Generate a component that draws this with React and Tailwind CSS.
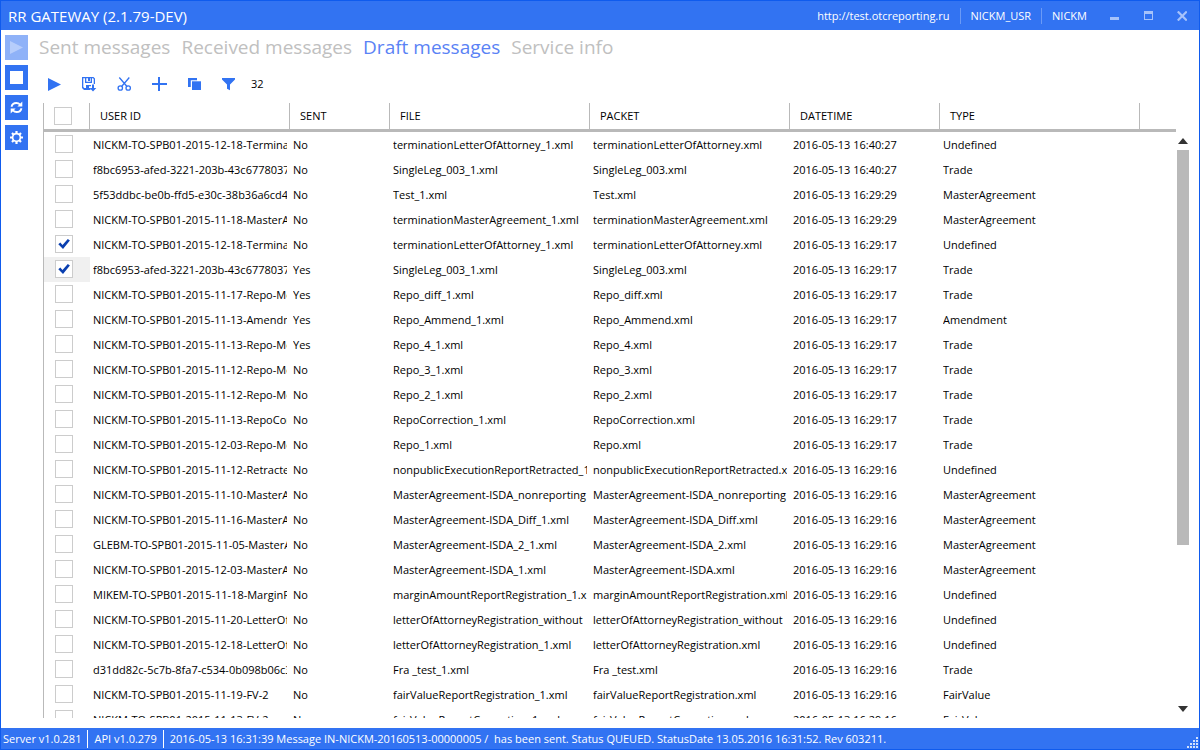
import { useState } from "react";

const ROWS = [
  ["NICKM-TO-SPB01-2015-12-18-Terminat", "No", "terminationLetterOfAttorney_1.xml", "terminationLetterOfAttorney.xml", "2016-05-13 16:40:27", "Undefined"],
  ["f8bc6953-afed-3221-203b-43c6778037", "No", "SingleLeg_003_1.xml", "SingleLeg_003.xml", "2016-05-13 16:40:27", "Trade"],
  ["5f53ddbc-be0b-ffd5-e30c-38b36a6cd4", "No", "Test_1.xml", "Test.xml", "2016-05-13 16:29:29", "MasterAgreement"],
  ["NICKM-TO-SPB01-2015-11-18-MasterA", "No", "terminationMasterAgreement_1.xml", "terminationMasterAgreement.xml", "2016-05-13 16:29:29", "MasterAgreement"],
  ["NICKM-TO-SPB01-2015-12-18-Terminat", "No", "terminationLetterOfAttorney_1.xml", "terminationLetterOfAttorney.xml", "2016-05-13 16:29:17", "Undefined"],
  ["f8bc6953-afed-3221-203b-43c6778037", "Yes", "SingleLeg_003_1.xml", "SingleLeg_003.xml", "2016-05-13 16:29:17", "Trade"],
  ["NICKM-TO-SPB01-2015-11-17-Repo-Mo", "Yes", "Repo_diff_1.xml", "Repo_diff.xml", "2016-05-13 16:29:17", "Trade"],
  ["NICKM-TO-SPB01-2015-11-13-Amendm", "Yes", "Repo_Ammend_1.xml", "Repo_Ammend.xml", "2016-05-13 16:29:17", "Amendment"],
  ["NICKM-TO-SPB01-2015-11-13-Repo-Mo", "Yes", "Repo_4_1.xml", "Repo_4.xml", "2016-05-13 16:29:17", "Trade"],
  ["NICKM-TO-SPB01-2015-11-12-Repo-Mo", "No", "Repo_3_1.xml", "Repo_3.xml", "2016-05-13 16:29:17", "Trade"],
  ["NICKM-TO-SPB01-2015-11-12-Repo-Mo", "No", "Repo_2_1.xml", "Repo_2.xml", "2016-05-13 16:29:17", "Trade"],
  ["NICKM-TO-SPB01-2015-11-13-RepoCor", "No", "RepoCorrection_1.xml", "RepoCorrection.xml", "2016-05-13 16:29:17", "Trade"],
  ["NICKM-TO-SPB01-2015-12-03-Repo-Mo", "No", "Repo_1.xml", "Repo.xml", "2016-05-13 16:29:17", "Trade"],
  ["NICKM-TO-SPB01-2015-11-12-Retracte", "No", "nonpublicExecutionReportRetracted_1", "nonpublicExecutionReportRetracted.x", "2016-05-13 16:29:16", "Undefined"],
  ["NICKM-TO-SPB01-2015-11-10-MasterA", "No", "MasterAgreement-ISDA_nonreporting", "MasterAgreement-ISDA_nonreporting", "2016-05-13 16:29:16", "MasterAgreement"],
  ["NICKM-TO-SPB01-2015-11-16-MasterA", "No", "MasterAgreement-ISDA_Diff_1.xml", "MasterAgreement-ISDA_Diff.xml", "2016-05-13 16:29:16", "MasterAgreement"],
  ["GLEBM-TO-SPB01-2015-11-05-MasterA", "No", "MasterAgreement-ISDA_2_1.xml", "MasterAgreement-ISDA_2.xml", "2016-05-13 16:29:16", "MasterAgreement"],
  ["NICKM-TO-SPB01-2015-12-03-MasterA", "No", "MasterAgreement-ISDA_1.xml", "MasterAgreement-ISDA.xml", "2016-05-13 16:29:16", "MasterAgreement"],
  ["MIKEM-TO-SPB01-2015-11-18-MarginR", "No", "marginAmountReportRegistration_1.x", "marginAmountReportRegistration.xml", "2016-05-13 16:29:16", "Undefined"],
  ["NICKM-TO-SPB01-2015-11-20-LetterOf", "No", "letterOfAttorneyRegistration_without", "letterOfAttorneyRegistration_without", "2016-05-13 16:29:16", "Undefined"],
  ["NICKM-TO-SPB01-2015-12-18-LetterOf", "No", "letterOfAttorneyRegistration_1.xml", "letterOfAttorneyRegistration.xml", "2016-05-13 16:29:16", "Undefined"],
  ["d31dd82c-5c7b-8fa7-c534-0b098b06c3", "No", "Fra _test_1.xml", "Fra _test.xml", "2016-05-13 16:29:16", "Trade"],
  ["NICKM-TO-SPB01-2015-11-19-FV-2", "No", "fairValueReportRegistration_1.xml", "fairValueReportRegistration.xml", "2016-05-13 16:29:16", "FairValue"],
  ["NICKM-TO-SPB01-2015-11-13-FV-2", "No", "fairValueReportCorrection_1.xml", "fairValueReportCorrection.xml", "2016-05-13 16:29:16", "FairValue"],
];

const HEADINGS = ["USER ID", "SENT", "FILE", "PACKET", "DATETIME", "TYPE"];
const TABS = ["Sent messages", "Received messages", "Draft messages", "Service info"];

function TickBox({ label, checked, onChange }) {
  return (
    <span className="grid size-[18px] grid-cols-1 grid-rows-1">
      <input
        type="checkbox"
        aria-label={label}
        checked={checked}
        onChange={onChange}
        className="col-start-1 row-start-1 size-[18px] appearance-none border border-[#cccccc] bg-white"
      />
      {checked && (
        <svg viewBox="0 0 18 18" className="pointer-events-none col-start-1 row-start-1 size-[18px]" aria-hidden="true">
          <path d="M3.300 9.200 5.300 7.500 7.500 9.900 12.800 4 14.900 5.400 8 13.900z" fill="#0a3fb0" />
        </svg>
      )}
    </span>
  );
}

function SideButton({ label, disabled, children }) {
  return (
    <button
      type="button"
      aria-label={label}
      disabled={disabled}
      className="flex h-[25px] w-[23px] items-center justify-center bg-[#3273f2] text-white disabled:bg-[#8fb2f8] disabled:text-[#b6cdfb]"
    >
      {children}
    </button>
  );
}

function ToolButton({ label, children }) {
  return (
    <button type="button" aria-label={label} className="flex size-5 items-center justify-center text-[#3273f2]">
      <svg viewBox="0 0 16 16" className="size-4" fill="currentColor" aria-hidden="true">
        {children}
      </svg>
    </button>
  );
}

function SideBar() {
  return (
    <nav className="flex w-[23px] flex-col gap-[5px] pt-[5px]" aria-label="Service control">
      <SideButton label="Start" disabled>
        <svg viewBox="0 0 13 13" className="size-[13px]" fill="currentColor">
          <path d="M0 0 13 6.500 0 13z" />
        </svg>
      </SideButton>
      <SideButton label="Stop">
        <svg viewBox="0 0 13 13" className="size-[13px]" fill="currentColor">
          <path d="M0 0h13v13H0z" />
        </svg>
      </SideButton>
      <SideButton label="Refresh">
        <svg viewBox="0 0 13 13" className="size-[13px]" fill="none" stroke="currentColor" strokeWidth="1.800">
          <path d="M1.500 5.800C2 3.400 3.800 2 6.300 2c1.600 0 2.800.6 3.800 1.700" />
          <path d="M11.500 7.200C11 9.600 9.200 11 6.700 11c-1.600 0-2.800-.6-3.800-1.700" />
          <path d="M12.300.600v4.900H7.400z" fill="currentColor" stroke="none" />
          <path d="M.700 12.400V7.500h4.900z" fill="currentColor" stroke="none" />
        </svg>
      </SideButton>
      <SideButton label="Settings">
        <svg viewBox="0 0 13 13" className="size-[13px]" fill="none" stroke="currentColor">
          <circle cx="6.500" cy="6.500" r="3.900" strokeWidth="1.700" />
          <path
            d="M6.500 0v2.500M6.500 10.500V13M0 6.500h2.500M10.500 6.500H13M2 2l1.700 1.700M9.300 9.300 11 11M11 2 9.300 3.700M3.700 9.300 2 11"
            strokeWidth="2.200"
          />
        </svg>
      </SideButton>
    </nav>
  );
}

function ToolBar() {
  return (
    <div className="flex h-[39px] shrink-0 items-start gap-3 pt-[10px] pl-[5px]" role="toolbar" aria-label="Message actions">
      <div className="flex gap-[15px]">
        <ToolButton label="Send">
          <path d="M2 2 15 8.500 2 15z" />
        </ToolButton>
        <ToolButton label="Save">
          <path d="M1 1h11.500L14 2.500V8h-1.300V3l-.7-.7h-1V7H4V2.300H2.300V11l1 1H5V9h5v1.300H8V12h1.500v2H3L1 12zM5.300 2.300v3.400h4.400V2.300H9V5H7V2.300z" fillRule="evenodd" />
          <path d="M11 8.500h2V12h2.300L12 15.500 8.700 12H11z" />
        </ToolButton>
        <ToolButton label="Cut">
          <path d="M3.300 1.500 11 10.500M13.300 1.500 5.600 10.500" fill="none" stroke="currentColor" strokeWidth="1.300" />
          <circle cx="4.300" cy="12" r="2.200" fill="none" stroke="currentColor" strokeWidth="1.300" />
          <circle cx="12.200" cy="12" r="2.200" fill="none" stroke="currentColor" strokeWidth="1.300" />
        </ToolButton>
        <ToolButton label="Add">
          <path d="M7 1h2v6h7v2H9v6H7V9H1V7h6z" />
        </ToolButton>
        <ToolButton label="Copy">
          <path d="M2 2h9v2.300H4.800V11H2z" />
          <path d="M6 5.300h9V14H6z" />
        </ToolButton>
        <ToolButton label="Filter">
          <path d="M1 2h13v1.500L9 8.500v5.800l-3-1.600V8.500L1 3.500z" />
        </ToolButton>
      </div>
      <span className="text-[11px] leading-5 text-black">32</span>
    </div>
  );
}

function MessageTable() {
  const [picked, setPicked] = useState([4, 5]);
  const toggle = (i) => setPicked((p) => (p.includes(i) ? p.filter((n) => n !== i) : [...p, i]));
  const all = picked.length === ROWS.length;
  return (
    <div className="min-w-0 flex-1 overflow-hidden border-l border-[#b9b9b9]">
      <table className="w-full table-fixed border-separate border-spacing-0 text-[11px] leading-4 text-black">
        <colgroup>
          <col className="w-[46px]" />
          <col className="w-[200px]" />
          <col className="w-[100px]" />
          <col className="w-[200px]" />
          <col className="w-[200px]" />
          <col className="w-[150px]" />
          <col className="w-[200px]" />
          <col />
        </colgroup>
        <thead>
          <tr className="h-[29px]">
            <th className="border-r border-b-3 border-r-[#b9b9b9] border-b-[#b9b9b9] p-0 pl-[10px]">
              <TickBox label="Select all" checked={all} onChange={() => setPicked(all ? [] : ROWS.map((_, i) => i))} />
            </th>
            {HEADINGS.map((h) => (
              <th key={h} scope="col" className="border-r border-b-3 border-r-[#b9b9b9] border-b-[#b9b9b9] p-0 pl-[10px] text-left font-normal">
                {h}
              </th>
            ))}
            <th className="border-b-3 border-[#b9b9b9] p-0" />
          </tr>
        </thead>
        <tbody>
          {ROWS.map((row, i) => (
            <tr key={i} className="h-[25px]">
              <td className={i === 5 ? "bg-[#f0f0f0] p-0 pt-[3px] pl-[11px] align-top" : "p-0 pt-[3px] pl-[11px] align-top"}>
                <TickBox label={"Select row " + (i + 1)} checked={picked.includes(i)} onChange={() => toggle(i)} />
              </td>
              {row.map((cell, c) => (
                <td key={c} className="px-[3px] py-0">
                  <div className="overflow-hidden whitespace-nowrap">{cell}</div>
                </td>
              ))}
              <td className="p-0" />
            </tr>
          ))}
        </tbody>
      </table>
    </div>
  );
}

function ScrollTrack() {
  return (
    <div className="flex w-[13px] flex-col items-center pt-[35px] pb-[6px]" aria-hidden="true">
      <svg viewBox="0 0 10 6" className="h-[6px] w-[10px] shrink-0" fill="#333333">
        <path d="M5 0 10 6H0z" />
      </svg>
      <div className="mt-[6px] flex w-full flex-1 flex-col pl-px">
        <div className="w-full flex-[395] bg-[#b9b9b9]" />
        <div className="flex-[161]" />
      </div>
      <svg viewBox="0 0 10 6" className="h-[6px] w-[10px] shrink-0" fill="#333333">
        <path d="M0 0h10L5 6z" />
      </svg>
    </div>
  );
}

export default function App() {
  return (
    <div className="flex h-screen flex-col overflow-hidden border border-[#0f5bee] bg-white font-['Open_Sans','Noto_Sans',sans-serif]">
      <header className="flex h-[29px] shrink-0 items-center bg-[#3273f2] pl-[7px] text-white">
        <h1 className="flex-1 text-[15px] leading-5">RR GATEWAY (2.1.79-DEV)</h1>
        <div className="flex items-center text-[11px] leading-4">
          <a href="http://test.otcreporting.ru" className="pr-[10px]">http://test.otcreporting.ru</a>
          <span className="border-l border-[#6b9af6] px-[10px]">NICKM_USR</span>
          <span className="border-l border-[#6b9af6] px-[10px]">NICKM</span>
        </div>
        <div className="flex items-center text-[#a6c2fa]">
          <button type="button" aria-label="Minimize" className="flex h-7 w-[34px] items-center justify-center">
            <svg viewBox="0 0 10 10" className="size-[10px]" fill="currentColor"><path d="M1 6h9v3H1z" /></svg>
          </button>
          <button type="button" aria-label="Maximize" className="flex h-7 w-[34px] items-center justify-center">
            <svg viewBox="0 0 10 10" className="size-[10px]" fill="currentColor"><path d="M1 0h9v9H1zM2 3v5h7V3z" fillRule="evenodd" /></svg>
          </button>
          <button type="button" aria-label="Close" className="flex h-7 w-[34px] items-center justify-center">
            <svg viewBox="0 0 10 10" className="size-[10px]" fill="none" stroke="currentColor" strokeWidth="2.200"><path d="M.8.5l9 9M9.800.5l-9 9" /></svg>
          </button>
        </div>
      </header>

      <div className="flex min-h-0 flex-1 pl-1">
        <SideBar />
        <main className="flex min-w-0 flex-1 flex-col pr-[10px] pb-[10px] pl-[11px]">
          <div className="flex h-[34px] shrink-0 gap-[11px] pt-[3px]" role="tablist">
            {TABS.map((t) => (
              <button
                key={t}
                type="button"
                role="tab"
                aria-selected={t === "Draft messages"}
                className="h-7 text-[19px] leading-7 whitespace-nowrap text-[#c0c0c0] aria-selected:text-[#5a82f5]"
              >
                {t}
              </button>
            ))}
          </div>
          <ToolBar />
          <div className="flex min-h-0 flex-1 pl-1">
            <MessageTable />
            <ScrollTrack />
          </div>
        </main>
      </div>

      <footer className="flex h-[21px] shrink-0 items-center justify-between bg-[#3273f2] pl-[2px] text-[11px] leading-[18px] text-white">
        <div className="flex items-center whitespace-pre">
          <span className="pr-[6px]">Server v1.0.281</span>
          <span className="border-l border-white px-[6px]">API v1.0.279</span>
          <span className="border-l border-white pl-[6px]">
            {"2016-05-13 16:31:39 Message IN-NICKM-20160513-00000005 /  has been sent. Status QUEUED. StatusDate 13.05.2016 16:31:52. Rev 603211."}
          </span>
        </div>
        <svg viewBox="0 0 12 12" className="size-3 self-end" fill="#d3e1fc" aria-hidden="true">
          <path d="M9 0h2v2H9zM6 3h2v2H6zM9 3h2v2H9zM3 6h2v2H3zM6 6h2v2H6zM9 6h2v2H9zM0 9h2v2H0zM3 9h2v2H3zM6 9h2v2H6zM9 9h2v2H9z" />
        </svg>
      </footer>
    </div>
  );
}
